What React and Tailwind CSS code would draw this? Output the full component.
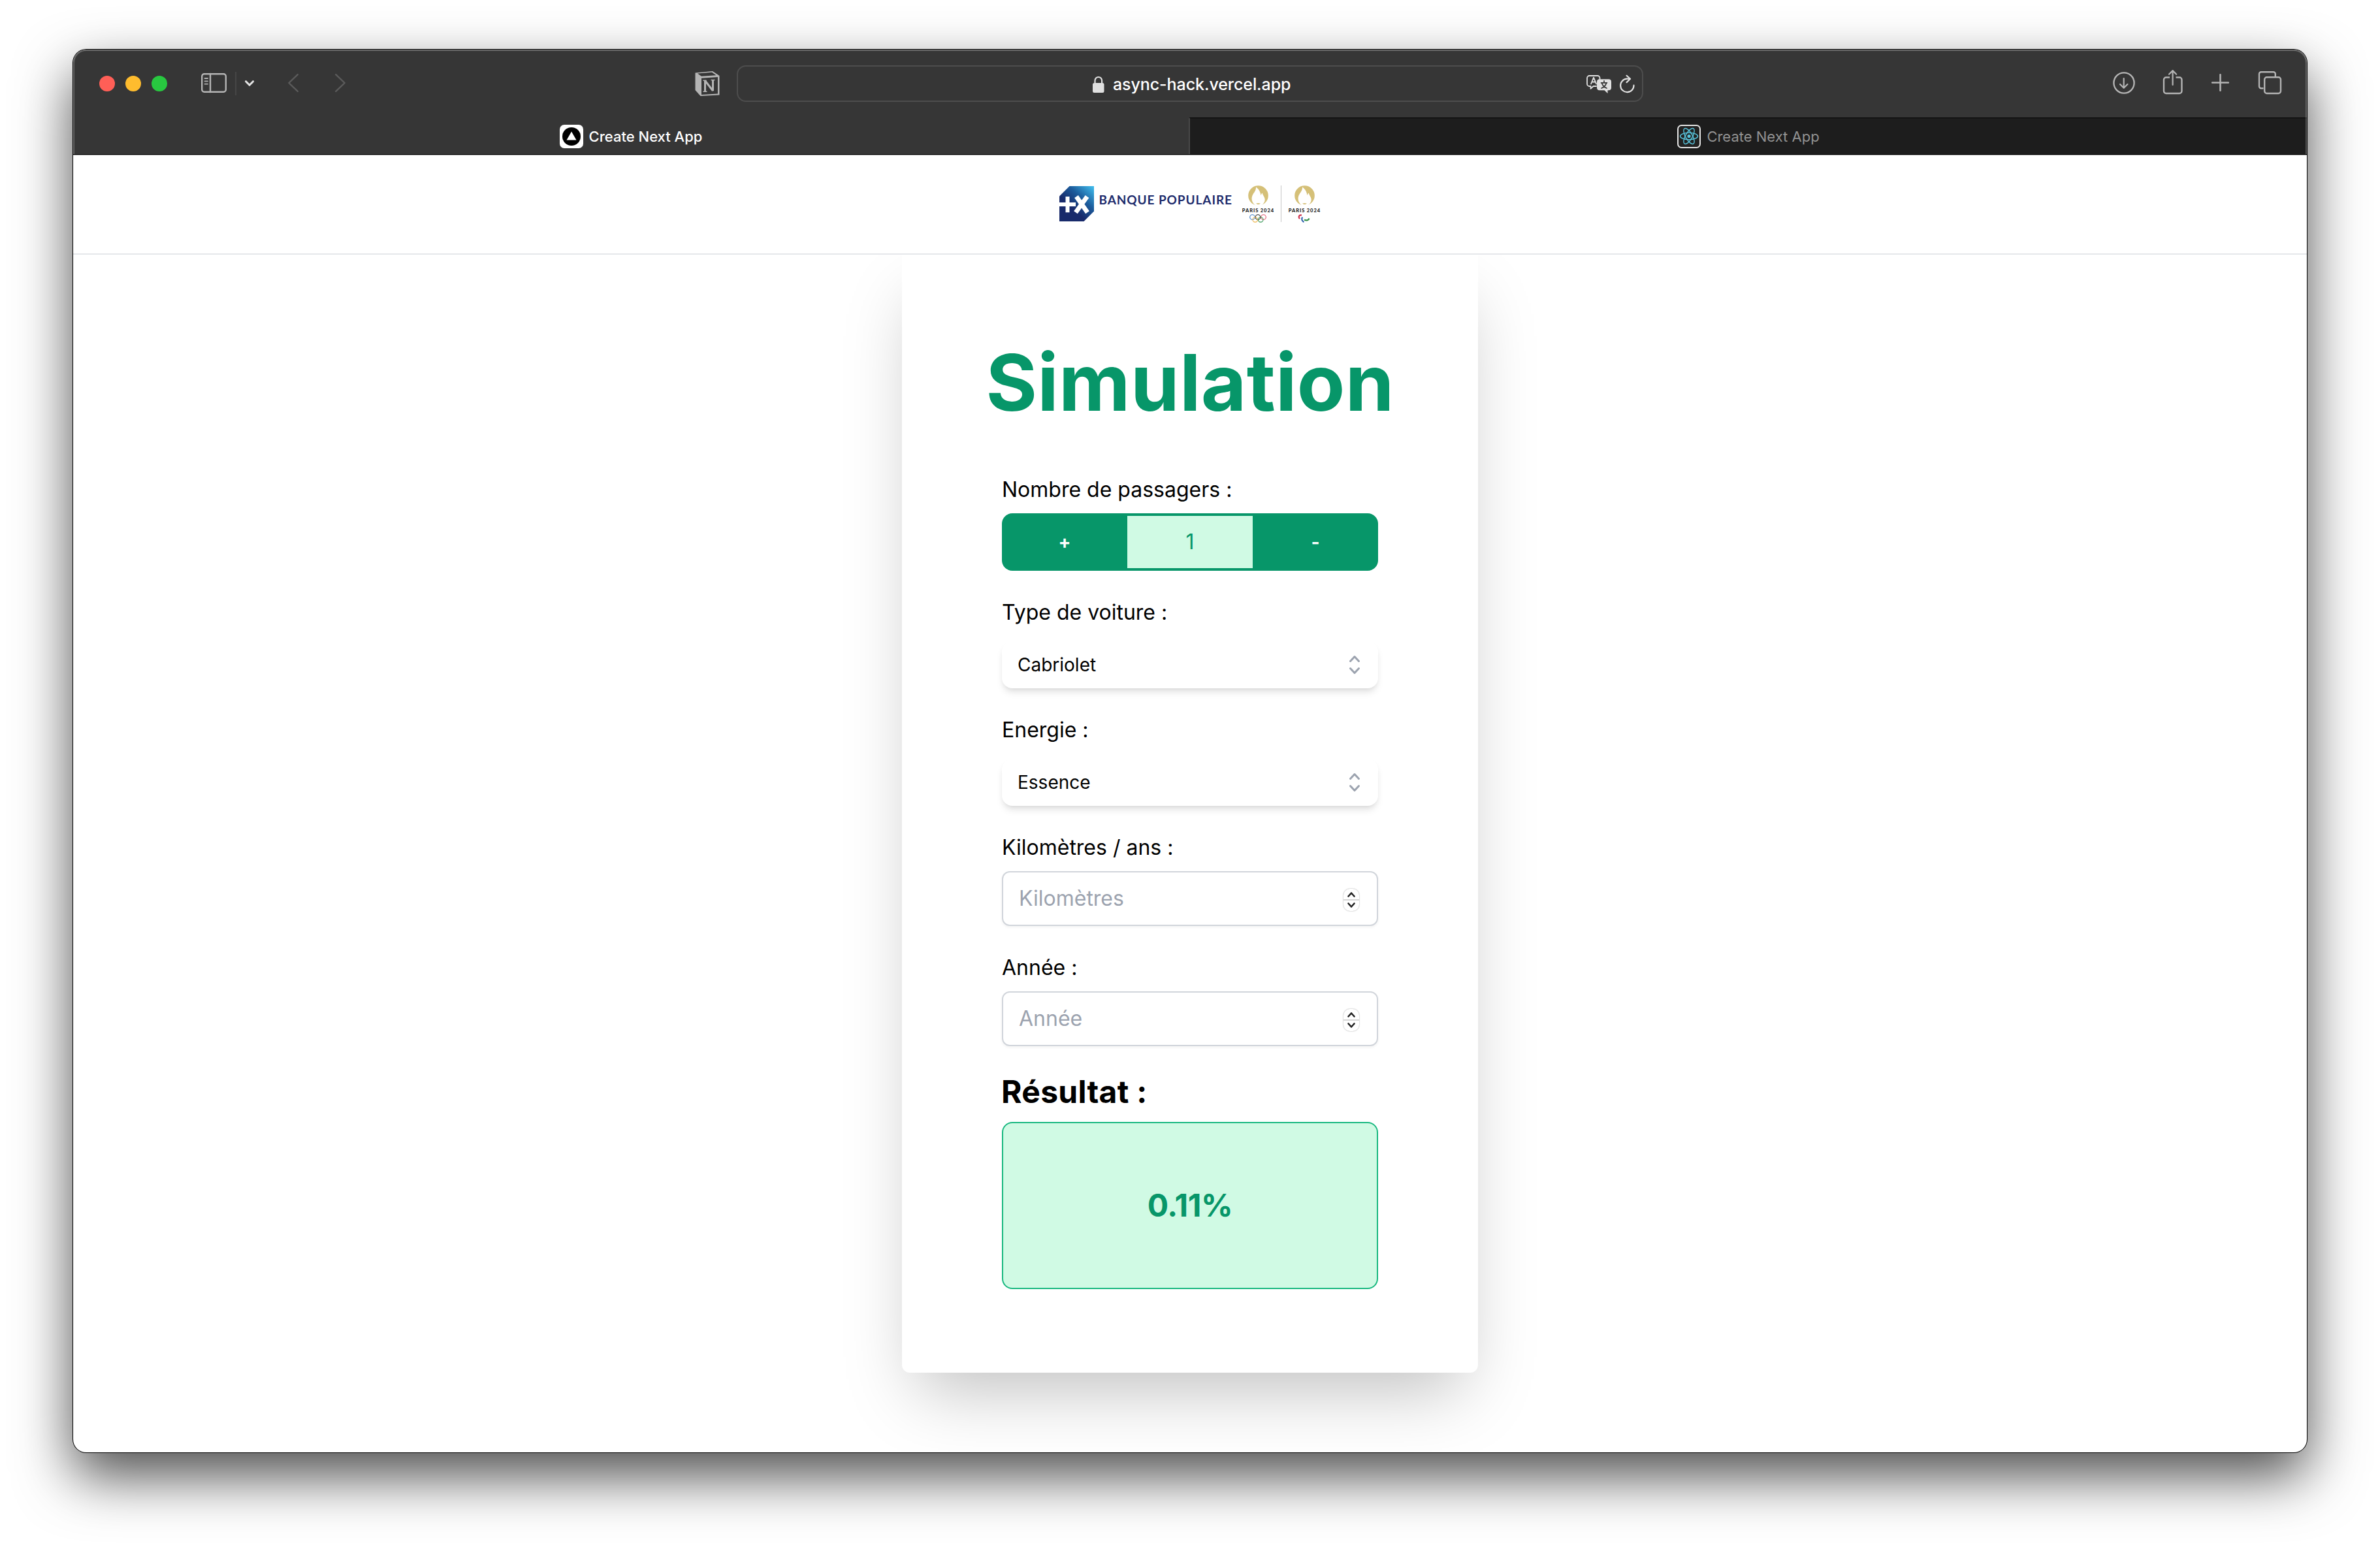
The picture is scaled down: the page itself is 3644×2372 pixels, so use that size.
import React from "react";

// Toolbar glyphs share one coordinate space: x is the glyph's left edge, rows run from 108 to 148.
function Icon({ x, w, className = "", children }) {
  return (
    <svg
      className={"shrink-0 overflow-visible " + className}
      width={w}
      height="40"
      viewBox={`${x} 108 ${w} 40`}
      fill="none"
      strokeWidth="2.4"
      strokeLinecap="round"
      strokeLinejoin="round"
    >
      {children}
    </svg>
  );
}

function Toolbar() {
  return (
    <div className="flex h-[104px] items-center bg-[#363636] pl-10 text-[#b4b4b4]">
      <div className="flex gap-4">
        <span className="size-6 rounded-full bg-[#ff5f57]" />
        <span className="size-6 rounded-full bg-[#febc2e]" />
        <span className="size-6 rounded-full bg-[#28c840]" />
      </div>
      <Icon x={308} w={39} className="ml-[52px]">
        <rect x="309.2" y="113.2" width="36.6" height="27.6" rx="3.5" stroke="currentColor" />
        <path d="M322 113v28" stroke="currentColor" />
        <path d="M313.5 120h4.5M313.5 124.3h4.5M313.5 128.6h4.5" stroke="currentColor" strokeWidth="1.8" />
      </Icon>
      <span className="ml-[13px] h-9 w-0.5 bg-[#464646]" />
      <Icon x={375} w={14} className="ml-[13px] text-[#e4e4e4]">
        <path d="M376.5 124.7l5.5 5.6 5.5-5.6" stroke="currentColor" strokeWidth="3" />
      </Icon>
      <Icon x={441} w={16} className="ml-[52px] text-[#5b5b5b]">
        <path d="M455.8 114.2L442.3 127l13.5 12.8" stroke="currentColor" />
      </Icon>
      <Icon x={513} w={16} className="ml-14 text-[#5b5b5b]">
        <path d="M514.2 114.2L527.7 127l-13.5 12.8" stroke="currentColor" />
      </Icon>
      <Icon x={1064} w={38} className="ml-[535px]">
        <path d="M1064.5 111.5L1091 109l10.5 7v29.5L1072.5 147l-8-9z" fill="currentColor" />
        <path d="M1068 112.5l22-1.8 6.5 4.6-22.5 1.5z" fill="#363636" />
        <path d="M1074 119.8l25-1.7v25.4l-25 1.5z" fill="#363636" />
        <path d="M1079.5 123.5v16.5M1079.500 123.500l12 15.500M1091.5 122.8v16.5" stroke="currentColor" strokeWidth="3" strokeLinecap="butt" />
        <path d="M1076.5 123.3h5M1088.5 122.5h6M1076.5 140.3h6" stroke="currentColor" strokeWidth="1.6" strokeLinecap="butt" />
      </Icon>
      <div className="ml-[26px] flex h-14 w-[1388px] items-center rounded-[14px] border-2 border-[#4d4d4d] pr-[11px] pl-[543px]">
        <Icon x={1673} w={18} className="text-[#e0e0e0]">
          <rect x="1673" y="127" width="17.5" height="15" rx="2.5" fill="currentColor" />
          <path d="M1676.5 127v-3.5a5.3 5.5 0 0 1 10.6 0V127" stroke="currentColor" strokeWidth="2.2" />
        </Icon>
        <span className="mt-0.5 ml-[13px] text-[25px] leading-8 font-medium tracking-[-0.08px] whitespace-nowrap text-white">
          async-hack.vercel.app
        </span>
        <div className="ml-auto flex text-[#e0e0e0]">
          <Icon x={2429} w={38}>
            <path
              d="M2449.5 121v-1.5a3.5 3.5 0 0 0-3.5-3.5h-12.500a3.500 3.500 0 0 0-3.500 3.500v9a3.500 3.500 0 0 0 3.500 3.500h2v3.800l4-3.800h4.500"
              stroke="currentColor"
              strokeWidth="1.8"
            />
            <path d="M2436 128.5l4-9.8 4 9.8M2437.4 125.5h5.2" stroke="currentColor" strokeWidth="1.8" />
            <path d="M2449 121.2h14a4 4 0 0 1 4 4v9a4 4 0 0 1-4 4h-1.5v4.8l-5-4.8h-7.5a4 4 0 0 1-4-4v-9a4 4 0 0 1 4-4z" fill="currentColor" />
            <path
              d="M2456 123.8v2M2451.5 126.8h9M2459.3 127.5c-.8 3.5-3.3 6-7.3 7.5M2452.8 127.5c.8 3.5 3.2 6 7.2 7.5"
              stroke="#363636"
              strokeWidth="1.7"
            />
          </Icon>
          <Icon x={2480} w={23} className="ml-[13px]">
            <path d="M2495.500 120.700h-4.500a10.200 10.200 0 1 0 10.500 10" stroke="currentColor" strokeWidth="2.2" />
            <path d="M2490.500 115.800l5.500 5-5.500 5.300" stroke="currentColor" strokeWidth="2.2" />
          </Icon>
        </div>
      </div>
      <Icon x={3235} w={34} className="ml-[719px]">
        <circle cx="3252" cy="127" r="15.6" stroke="currentColor" />
        <path d="M3251.7 120v14.5M3246 129l5.7 5.7 5.7-5.7" stroke="currentColor" strokeWidth="2.2" />
      </Icon>
      <Icon x={3312} w={30} className="ml-[43px]">
        <path
          d="M3322 118.500h-5.500a3.500 3.500 0 0 0-3.500 3.500v17.500a3.500 3.500 0 0 0 3.500 3.500h20.500a3.500 3.500 0 0 0 3.500-3.500v-17.500a3.500 3.500 0 0 0-3.500-3.500h-5.500"
          stroke="currentColor"
          strokeLinecap="butt"
        />
        <path d="M3326.6 130v-21.5M3321 113.7l5.6-5.6 5.6 5.6" stroke="currentColor" strokeWidth="2.2" />
      </Icon>
      <Icon x={3386} w={27} className="ml-11">
        <path d="M3387.2 126.5h24.6M3399.5 114.2v24.6" stroke="currentColor" strokeWidth="2.6" />
      </Icon>
      <Icon x={3458} w={35} className="ml-[45px]">
        <path d="M3465.5 135.3h-3.5a3 3 0 0 1-3-3v-19.100a3 3 0 0 1 3-3h18.800a3 3 0 0 1 3 3v3.800" stroke="currentColor" strokeLinecap="butt" />
        <rect x="3467.2" y="118.2" width="24.8" height="24.8" rx="3.5" stroke="currentColor" />
      </Icon>
    </div>
  );
}

function TabBar() {
  return (
    <div className="flex h-14 text-[22px] leading-8">
      <div className="flex w-[1708px] items-center justify-center bg-[#363636] pt-0.5 font-medium text-white">
        <svg width="36" height="36" viewBox="0 0 36 36" className="mr-[9px]">
          <rect width="36" height="36" rx="7" fill="#fff" />
          <circle cx="18" cy="18" r="14" fill="#000" />
          <path d="M18 10.5l7.5 13h-15z" fill="#fff" />
        </svg>
        <span>Create Next App</span>
      </div>
      <div className="flex flex-1 items-center justify-center border-t border-l-2 border-t-black border-l-[#484848] bg-[#1d1d1d] pt-px text-[#929292]">
        <svg width="36" height="36" viewBox="0 0 36 36" className="mr-[9px]" fill="none">
          <rect x="1" y="1" width="34" height="34" rx="5.5" fill="#222" stroke="#e4e4e4" strokeWidth="2" />
          <circle cx="18" cy="17.5" r="2.6" fill="#58c4dc" />
          <g stroke="#58c4dc" strokeWidth="1.4">
            <ellipse cx="18" cy="17.5" rx="13.5" ry="5.2" />
            <ellipse cx="18" cy="17.5" rx="13.5" ry="5.2" transform="rotate(60 18 17.5)" />
            <ellipse cx="18" cy="17.5" rx="13.5" ry="5.2" transform="rotate(120 18 17.5)" />
          </g>
        </svg>
        <span>Create Next App</span>
      </div>
    </div>
  );
}

function Flame() {
  return (
    <svg width="31" height="31" viewBox="0 0 31 31">
      <circle cx="15.5" cy="15.5" r="15.3" fill="#d5c078" />
      <path
        d="M12 2.5c.3 5-2.500 7.500-4.500 11C4.500 18.500 4.500 25 11 30.500L13 32h5l2.500-1.500c4.500-3.500 6-7 4.800-11-.8-2.800-2.800-4.800-3.600-8-1.200 1-1.800 2.200-2.200 3.800C18.800 10 16.500 5.500 12 2.500z"
        fill="#fff"
      />
      <path d="M12.2 27.200c1.200.4 2.200 0 3.300-.1 1.100.1 2.100.5 3.300.1-.9 1.400-2 1.800-3.300 1.800s-2.400-.4-3.300-1.800z" fill="#d5c078" />
    </svg>
  );
}

function Emblem({ children }) {
  return (
    <div className="flex w-[50px] flex-col items-center">
      <Flame />
      <span className="mt-[2.5px] font-['Lato',sans-serif] text-[7.5px] leading-[9px] font-black tracking-[0.9px] whitespace-nowrap text-[#222]">
        PARIS 2024
      </span>
      <svg width="26" height="13" viewBox="0 0 26 13" fill="none" strokeWidth="1.1" className="mt-px">
        {children}
      </svg>
    </div>
  );
}

function SiteNav() {
  return (
    <nav className="relative z-10 flex h-[152px] shrink-0 justify-center border-b-2 border-[#e5e7eb] bg-white pt-[46px]">
      <div className="flex w-[400px]">
        <svg width="53" height="54" viewBox="0 0 53 54" className="mt-[0.5px] shrink-0">
          <defs>
            <linearGradient id="bp" x1="0.4" y1="0.65" x2="1" y2="0">
              <stop offset="0" stopColor="#182a6b" />
              <stop offset="0.45" stopColor="#1c5c9c" />
              <stop offset="1" stopColor="#41c0f0" />
            </linearGradient>
          </defs>
          <path d="M15.5 0H53v38.5L37.5 54H0V15.5z" fill="url(#bp)" />
          <path d="M0 28h25M12.5 16v24.3" stroke="#fff" strokeWidth="6" />
          <path d="M26 16l17 24.3M42.500 16l-17.500 24.300" stroke="#fff" strokeWidth="7" />
        </svg>
        <span className="mt-2 ml-[7.5px] w-[205px] font-['Lato',sans-serif] text-[19px] leading-7 font-bold tracking-[0.9px] whitespace-nowrap text-[#1d2b6c]">
          BANQUE POPULAIRE
        </span>
        <div className="ml-[14.5px] flex">
          <Emblem>
            <circle cx="4.5" cy="4.5" r="3.8" stroke="#3b7cc4" />
            <circle cx="13" cy="4.5" r="3.8" stroke="#222" />
            <circle cx="21.5" cy="4.5" r="3.8" stroke="#e0536b" />
            <circle cx="8.8" cy="8.3" r="3.8" stroke="#efb54a" />
            <circle cx="17.2" cy="8.3" r="3.8" stroke="#3b9a5b" />
          </Emblem>
          <span className="mx-2.5 h-14 w-px bg-[#c8c8c8]" />
          <Emblem>
            <g strokeWidth="2.2">
              <path d="M9 1.500C5 .8 3.500 4 6 7" stroke="#cf3350" />
              <path d="M10 4.500c-1.500 3-.5 6 2.500 7.500" stroke="#2f62ad" />
              <path d="M13 8.500c3.500 2 6.500.5 7.500-2" stroke="#35904b" />
            </g>
          </Emblem>
        </div>
      </div>
    </nav>
  );
}

function Field({ label, children }) {
  return (
    <div>
      <div className="text-[32px] leading-[48px] text-black">{label}</div>
      {children}
    </div>
  );
}

function Select({ value }) {
  return (
    <div className="mt-5 flex h-[72px] items-center justify-between rounded-2xl bg-white pr-4 pl-6 text-black shadow-[0_8px_12px_-2px_rgba(0,0,0,0.1),0_4px_8px_-4px_rgba(0,0,0,0.1)]">
      <span className="text-[28px] leading-10">{value}</span>
      <svg width="40" height="40" viewBox="0 0 20 20" fill="#9ca3af">
        <path d="M10 3a.75.75 0 01.55.24l3.25 3.5a.75.75 0 11-1.1 1.02L10 4.852 7.3 7.76a.75.75 0 01-1.1-1.02l3.25-3.5A.75.75 0 0110 3zm-3.76 9.2a.75.75 0 011.06.04l2.7 2.908 2.7-2.908a.75.75 0 111.1 1.02l-3.25 3.5a.75.75 0 01-1.1 0l-3.25-3.5a.75.75 0 01.04-1.06z" />
      </svg>
    </div>
  );
}

function NumberInput({ placeholder }) {
  return (
    <div className="mt-3 flex h-[84px] items-center justify-between rounded-xl border-2 border-[#d1d5db] bg-white pr-[27px] pl-6 shadow-[0_2px_4px_rgba(0,0,0,0.05)]">
      <span className="text-[32px] leading-[48px] text-[#9ca3af]">{placeholder}</span>
      <svg
        width="24"
        height="34"
        viewBox="0 0 24 34"
        fill="none"
        stroke="#222"
        strokeWidth="2.6"
        strokeLinecap="round"
        strokeLinejoin="round"
        className="mt-1 rounded-[10px] shadow-[0_0_2px_rgba(0,0,0,0.4)]"
      >
        <path d="M0 17h24" stroke="#d6d6d6" strokeWidth="2" strokeLinecap="butt" />
        <path d="M7.5 11.5l4.5-5 4.5 5M7.5 22.5l4.5 5 4.5-5" />
      </svg>
    </div>
  );
}

function Simulation() {
  return (
    <main className="mx-auto h-[1712px] w-[882px] rounded-b-xl bg-white px-[153px] pt-[136px] shadow-[0_50px_100px_-24px_rgba(0,0,0,0.25)]">
      <h1 className="flex justify-center text-[120px] leading-[120px] font-bold tracking-[0.3px] text-[#079669]">Simulation</h1>
      <div className="mt-20 flex flex-col gap-10">
        <Field label="Nombre de passagers :">
          <div className="mt-3 grid h-[88px] grid-cols-3 overflow-hidden rounded-2xl bg-[#079669] text-center text-white">
            <button className="text-[28px] font-bold">+</button>
            <span className="my-1 bg-[#d0fae4] text-[32px] leading-[80px] text-[#079669]">1</span>
            <button className="text-[28px] font-bold">-</button>
          </div>
        </Field>
        <Field label="Type de voiture :">
          <Select value="Cabriolet" />
        </Field>
        <Field label="Energie :">
          <Select value="Essence" />
        </Field>
        <Field label="Kilomètres / ans :">
          <NumberInput placeholder="Kilomètres" />
        </Field>
        <Field label="Année :">
          <NumberInput placeholder="Année" />
        </Field>
      </div>
      <h2 className="mt-[38px] -ml-px text-[48px] leading-[64px] font-bold tracking-[0.3px] text-black">Résultat :</h2>
      <div className="mt-3.5 flex h-64 items-center justify-center rounded-2xl border-2 border-[#1bb981] bg-[#d0fae4] text-[48px] font-bold tracking-[-0.5px] text-[#079669]">
        0.11%
      </div>
    </main>
  );
}

export default function App() {
  return (
    <div className="h-[2372px] w-[3644px] overflow-hidden bg-white pt-[76px] pl-[112px] font-['Inter',sans-serif]">
      <div className="flex h-[2148px] w-[3420px] flex-col overflow-hidden rounded-[20px] bg-white shadow-[0_0_0_1px_#000,0_36px_86px_rgba(0,0,0,0.7)]">
        <header className="relative shrink-0 border-b border-black">
          <Toolbar />
          <TabBar />
          <div className="pointer-events-none absolute inset-0 rounded-t-[20px] border-x-2 border-t-2 border-white/25" />
        </header>
        <div className="h-px shrink-0 bg-[#b0b0b0]" />
        <SiteNav />
        <Simulation />
      </div>
    </div>
  );
}
